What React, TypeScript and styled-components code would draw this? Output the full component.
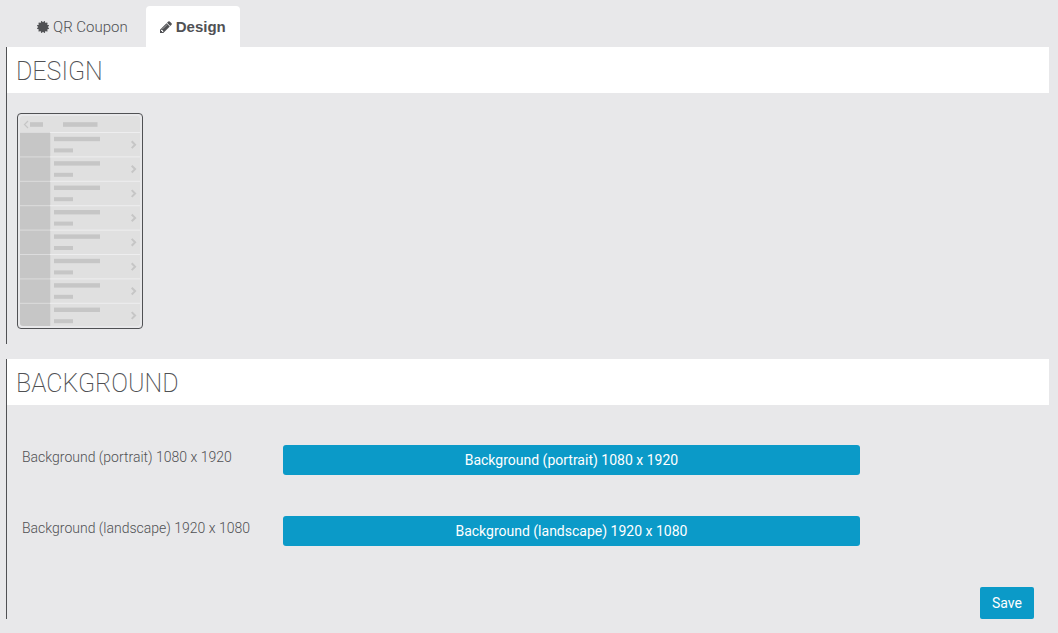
import React from "react";
import styled, { createGlobalStyle } from "styled-components";

const colors = {
  page: "#e8e8ea",
  ink: "#505154",
  panel: "#ffffff",
  accent: "#0b9ac8",
  screen: "#e0e0e0",
  block: "#c6c6c6",
};

const GlobalStyle = createGlobalStyle`
  *, *::before, *::after { box-sizing: border-box; }
  body {
    margin: 0;
    background: ${colors.page};
    color: ${colors.ink};
    font-family: Roboto, "Liberation Sans", sans-serif;
    font-size: 14px;
    font-weight: 300;
    line-height: 20px;
  }
`;

const Page = styled.main`
  padding: 6px 9px 14px 6px;
`;

const Tabs = styled.nav`
  display: flex;
  gap: 4px;
  padding-left: 17px;
`;

const Tab = styled.a<{ $active?: boolean }>`
  display: flex;
  align-items: center;
  gap: 4px;
  height: 41px;
  padding: 0 14px;
  border-radius: 4px 4px 0 0;
  background: ${(p) => (p.$active ? colors.panel : "transparent")};
  color: ${colors.ink};
  font-family: ${(p) => (p.$active ? '"Liberation Sans", sans-serif' : "inherit")};
  font-weight: ${(p) => (p.$active ? 700 : 300)};
  font-size: 15px;
  text-decoration: none;
`;

const TabIcon = styled.svg`
  width: 12px;
  height: 12px;
  fill: currentColor;
`;

const Section = styled.section`
  border-left: 1px solid ${colors.ink};

  & + & {
    margin-top: 15px;
  }
`;

const SectionTitle = styled.h2`
  margin: 0;
  padding: 10px 9px 6px;
  background: ${colors.panel};
  font-size: 25px;
  font-weight: 200;
  line-height: 30px;
`;

const Layouts = styled.div`
  display: flex;
  flex-wrap: wrap;
  gap: 10px;
  padding: 20px 10px 15px;
`;

const LayoutOption = styled.button`
  display: block;
  padding: 2px;
  border: 1px solid ${colors.ink};
  border-radius: 4px;
  background: transparent;
  cursor: pointer;

  svg {
    display: block;
  }
`;

const Form = styled.form`
  padding-top: 40px;
`;

const Field = styled.div`
  display: grid;
  grid-template-columns: minmax(0, 3fr) minmax(0, 7fr) minmax(0, 2fr);
  margin-bottom: 41px;
`;

const FieldLabel = styled.label`
  padding: 2px 0 0 15px;
`;

const FieldControl = styled.div`
  display: flex;
  padding: 0 15px;
`;

const Button = styled.button<{ $block?: boolean }>`
  width: ${(p) => (p.$block ? "100%" : "auto")};
  height: ${(p) => (p.$block ? "30px" : "32px")};
  padding: 0 12px;
  border: 0;
  border-radius: ${(p) => (p.$block ? "3px" : "2px")};
  background: ${colors.accent};
  color: #ffffff;
  font: inherit;
  font-weight: 400;
  cursor: pointer;
`;

const Actions = styled.div`
  display: flex;
  justify-content: flex-end;
  padding-right: 15px;
`;

const CertificateIcon = () => (
  <TabIcon viewBox="0 0 1536 1536" aria-hidden="true">
    <path d="M1376 768l138 135q30 28 20 70-12 41-52 51l-188 48 53 186q12 41-19 70-29 31-70 19l-186-53-48 188q-10 40-51 52-12 2-19 2-31 0-51-22l-135-138-135 138q-28 30-70 20-41-11-51-52l-48-188-186 53q-41 12-70-19-31-29-19-70l53-186-188-48q-40-10-52-51-10-42 20-70l138-135-138-135q-30-28-20-70 12-41 52-51l188-48-53-186q-12-41 19-70 29-31 70-19l186 53 48-188q10-41 51-51 41-12 70 19l135 139 135-139q29-30 70-19 41 10 51 51l48 188 186-53q41-12 70 19 31 29 19 70l-53 186 188 48q40 10 52 51 10 42-20 70z" />
  </TabIcon>
);

const PencilIcon = () => (
  <TabIcon viewBox="0 0 1536 1536" aria-hidden="true">
    <path d="M363 1408l91-91-235-235-91 91v107h128v128h107zm523-928q0-22-22-22-10 0-17 7l-542 542q-7 7-7 17 0 22 22 22 10 0 17-7l542-542q7-7 7-17zm-54-192l416 416-832 832h-416v-416zm683 96q0 53-37 90l-166 166-416-416 166-165q36-38 90-38 53 0 91 38l235 234q37 39 37 91z" />
  </TabIcon>
);

const ROW_PITCH = 24.4;

const ListLayoutPreview = () => (
  <svg width="120" height="210" viewBox="0 0 120 210" aria-hidden="true">
    <clipPath id="screen">
      <rect width="120" height="210" rx="3" />
    </clipPath>
    <g clipPath="url(#screen)">
      <rect width="120" height="210" fill={colors.screen} />
      <path d="M8 5L4.500 8.500L8 12" fill="none" stroke={colors.block} strokeWidth="1.200" />
      <rect x="10" y="6.200" width="13" height="4.600" fill={colors.block} />
      <rect x="43" y="6.200" width="34.500" height="4.600" fill={colors.block} />
      <rect y="16.800" width="30" height="194" fill={colors.block} />
      <rect x="30" y="16.800" width="1" height="194" fill="#d9d9d9" />
      {Array.from({ length: 8 }, (_, i) => (
        <g key={i} transform={`translate(0 ${i * ROW_PITCH})`}>
          <rect y="16" width="30" height="1" fill="#dcdcdd" />
          <rect x="30" y="16" width="90" height="1" fill="#eeeeef" />
          <rect x="34" y="20.800" width="46" height="4.400" fill={colors.block} />
          <rect x="34" y="32.400" width="19" height="4" fill={colors.block} />
          <path d="M111.700 25.300L115.100 28.700L111.700 32.100" fill="none" stroke={colors.block} strokeWidth="2" />
        </g>
      ))}
    </g>
  </svg>
);

const FIELDS = [
  { id: "portrait", label: "Background (portrait) 1080 x 1920" },
  { id: "landscape", label: "Background (landscape) 1920 x 1080" },
];

export default function App() {
  return (
    <>
      <GlobalStyle />
      <Page>
        <Tabs>
          <Tab href="#coupon">
            <CertificateIcon />
            QR Coupon
          </Tab>
          <Tab href="#design" $active aria-current="page">
            <PencilIcon />
            Design
          </Tab>
        </Tabs>
        <Section>
          <SectionTitle>DESIGN</SectionTitle>
          <Layouts>
            <LayoutOption type="button" aria-label="List layout">
              <ListLayoutPreview />
            </LayoutOption>
          </Layouts>
        </Section>
        <Section>
          <SectionTitle>BACKGROUND</SectionTitle>
          <Form onSubmit={(e) => e.preventDefault()}>
            {FIELDS.map((field) => (
              <Field key={field.id}>
                <FieldLabel htmlFor={field.id}>{field.label}</FieldLabel>
                <FieldControl>
                  <Button id={field.id} type="button" $block>
                    {field.label}
                  </Button>
                </FieldControl>
              </Field>
            ))}
            <Actions>
              <Button type="submit">Save</Button>
            </Actions>
          </Form>
        </Section>
      </Page>
    </>
  );
}
